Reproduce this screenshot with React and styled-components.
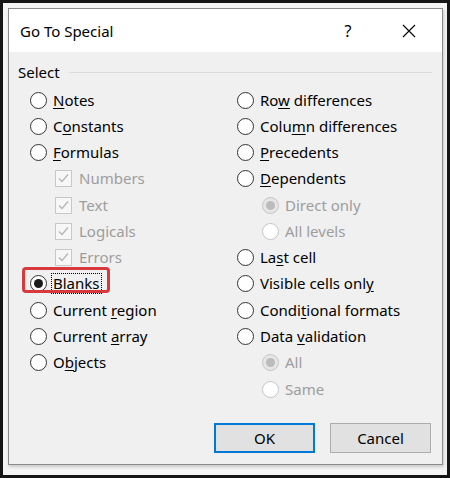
import styled, { createGlobalStyle, css } from 'styled-components';

const GlobalStyle = createGlobalStyle`
    html, body {
        margin: 0;
        padding: 0;
        background: #ffffff;
    }
    body {
        font-family: 'Segoe UI', 'Noto Sans', 'Open Sans', sans-serif;
        font-size: 15px;
        color: #000;
    }
`;

const leftOptions = [
    { label: 'Notes', key: 0 },
    { label: 'Constants', key: 1 },
    { label: 'Formulas', key: 0 },
    { label: 'Numbers', type: 'check', sub: true },
    { label: 'Text', type: 'check', sub: true },
    { label: 'Logicals', type: 'check', sub: true },
    { label: 'Errors', type: 'check', sub: true },
    { label: 'Blanks', key: 4, checked: true, focused: true },
    { label: 'Current region', key: 8 },
    { label: 'Current array', key: 8 },
    { label: 'Objects', key: 1 },
];

const rightOptions = [
    { label: 'Row differences', key: 2 },
    { label: 'Column differences', key: 4 },
    { label: 'Precedents', key: 0 },
    { label: 'Dependents', key: 0 },
    { label: 'Direct only', sub: true, checked: true },
    { label: 'All levels', sub: true },
    { label: 'Last cell', key: 2 },
    { label: 'Visible cells only', key: 17 },
    { label: 'Conditional formats', key: 5 },
    { label: 'Data validation', key: 5 },
    { label: 'All', sub: true, checked: true },
    { label: 'Same', sub: true },
];

const withAccessKey = (text, idx) => {
    if (idx === undefined || idx < 0) return text;
    return (
        <>
            {text.slice(0, idx)}
            <Key>{text[idx]}</Key>
            {text.slice(idx + 1)}
        </>
    );
};

const Option = ({ label, key: _k, accessKey, type, sub, checked, focused }) => {
    const disabled = !!sub;
    return (
        <Row $sub={sub} $highlight={focused}>
            {type === 'check' ? (
                <CheckBox $disabled={disabled}>
                    <svg width='13' height='13' viewBox='0 0 13 13'>
                        <polyline
                            points='2,6.5 5,9.5 11,2.5'
                            fill='none'
                            stroke='#b4b4b4'
                            strokeWidth='1.2'
                        />
                    </svg>
                </CheckBox>
            ) : (
                <Radio $disabled={disabled} $checked={checked} />
            )}
            <Label $disabled={disabled} $focused={focused}>
                {withAccessKey(label, accessKey)}
            </Label>
        </Row>
    );
};

const App = () => {
    return (
        <>
            <GlobalStyle />
            <Frame>
                <Dialog>
                    <TitleBar>
                        <Title>Go To Special</Title>
                        <TitleButtons>
                            <HelpButton>?</HelpButton>
                            <CloseButton>
                                <svg width='14' height='14' viewBox='0 0 14 14'>
                                    <path d='M1 1 L13 13 M13 1 L1 13' stroke='#000' strokeWidth='1.1' />
                                </svg>
                            </CloseButton>
                        </TitleButtons>
                    </TitleBar>
                    <Body>
                        <Legend>
                            <span>Select</span>
                            <LegendLine />
                        </Legend>
                        <Columns>
                            <Column>
                                {leftOptions.map((o) => (
                                    <Option key={o.label} {...o} accessKey={o.key} />
                                ))}
                            </Column>
                            <Column>
                                {rightOptions.map((o) => (
                                    <Option key={o.label} {...o} accessKey={o.key} />
                                ))}
                            </Column>
                        </Columns>
                    </Body>
                    <Footer>
                        <Button $default>OK</Button>
                        <Button>Cancel</Button>
                    </Footer>
                </Dialog>
            </Frame>
        </>
    );
};

export default App;

const Frame = styled.div`
    width: 450px;
    height: 478px;
    box-sizing: border-box;
    border: 3px solid #151515;
    background: #f4f4f4;
    padding: 5px 4px 10px 5px;
`;

const Dialog = styled.div`
    height: 100%;
    box-sizing: border-box;
    border: 1px solid #8c8c8c;
    background: #f0f0f0;
    display: flex;
    flex-direction: column;
    box-shadow: 1px 2px 3px rgba(0, 0, 0, 0.18);
`;

const TitleBar = styled.div`
    height: 43px;
    flex: none;
    background: #ffffff;
    display: flex;
    align-items: center;
    padding-left: 11px;
`;

const Title = styled.div`
    flex: 1;
    font-size: 15px;
    line-height: 1;
    padding-top: 1px;
`;

const TitleButtons = styled.div`
    display: flex;
    align-items: center;
    gap: 36px;
    padding-right: 18px;
`;

const HelpButton = styled.div`
    width: 20px;
    text-align: center;
    font-size: 16px;
`;

const CloseButton = styled.div`
    width: 30px;
    height: 20px;
    display: flex;
    align-items: center;
    justify-content: center;
`;

const Body = styled.div`
    flex: 1;
    padding-top: 10px;
`;

const Legend = styled.div`
    height: 20px;
    display: flex;
    align-items: center;
    gap: 9px;
    padding: 0 10px 0 9px;
`;

const LegendLine = styled.div`
    flex: 1;
    height: 1px;
    background: #dcdcdc;
`;

const Columns = styled.div`
    margin-top: 5px;
    padding-left: 21px;
    display: grid;
    grid-template-columns: 207px 1fr;
`;

const Column = styled.div`
    display: flex;
    flex-direction: column;
`;

const Row = styled.div`
    position: relative;
    height: 26.27px;
    display: flex;
    align-items: center;
    gap: 6px;
    padding-left: ${(p) => (p.$sub ? '25px' : '0')};
    ${(p) =>
        p.$highlight &&
        css`
            &::after {
                content: '';
                position: absolute;
                left: -8px;
                top: -4px;
                width: 88px;
                height: 26px;
                box-sizing: border-box;
                border: 3px solid #d8393c;
                border-radius: 4px;
            }
        `}
`;

const Radio = styled.span`
    width: 17px;
    height: 17px;
    flex: none;
    box-sizing: border-box;
    border-radius: 50%;
    border: 1px solid ${(p) => (p.$disabled ? '#c4c4c4' : '#333333')};
    background: ${(p) => (p.$disabled && p.$checked ? '#e6e6e6' : '#ffffff')};
    display: flex;
    align-items: center;
    justify-content: center;
    &::after {
        content: '';
        display: ${(p) => (p.$checked ? 'block' : 'none')};
        width: 9px;
        height: 9px;
        border-radius: 50%;
        background: ${(p) => (p.$disabled ? '#bcbcbc' : '#1a1a1a')};
    }
`;

const CheckBox = styled.span`
    width: 17px;
    height: 17px;
    flex: none;
    box-sizing: border-box;
    border: 1px solid #c8c8c8;
    background: #f7f7f7;
    display: flex;
    align-items: center;
    justify-content: center;
    margin-right: 1px;
`;

const Label = styled.span`
    color: ${(p) => (p.$disabled ? '#9d9d9d' : '#000000')};
    line-height: 19px;
    padding: 0 1px;
    border: 1px dotted ${(p) => (p.$focused ? '#000' : 'transparent')};
    margin-left: -2px;
`;

const Key = styled.span`
    text-decoration: underline;
    text-underline-offset: 2px;
`;

const Footer = styled.div`
    display: flex;
    justify-content: flex-end;
    gap: 15px;
    padding: 0 11px 11px 0;
`;

const Button = styled.button`
    width: 101px;
    height: 30px;
    box-sizing: border-box;
    font-family: inherit;
    font-size: 15px;
    color: #000;
    background: #e1e1e1;
    border: ${(p) => (p.$default ? '2px solid #0078d7' : '1px solid #adadad')};
    padding: 0;
`;
